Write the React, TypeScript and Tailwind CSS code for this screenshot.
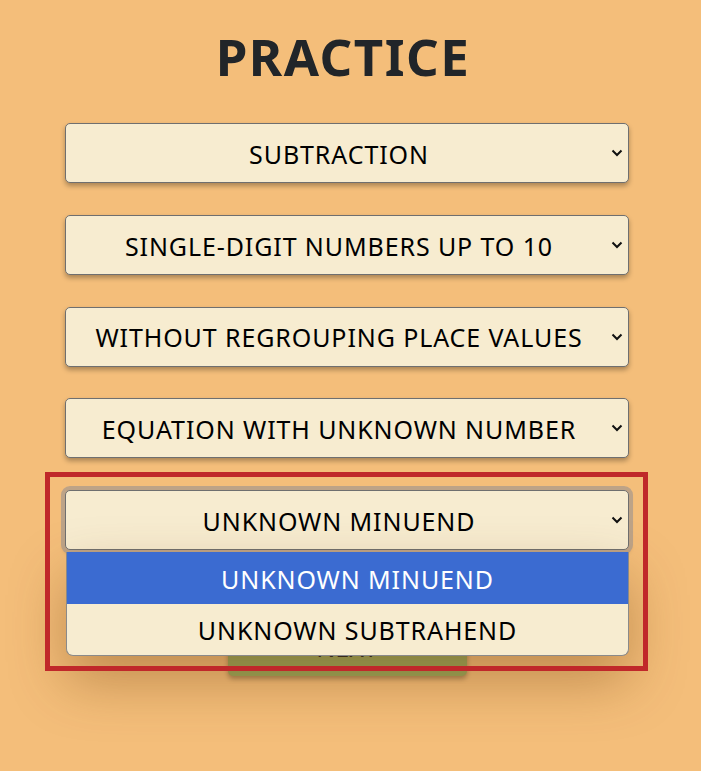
import React from "react";

function Chevron() {
  return (
    <svg width="12" height="8" viewBox="0 0 12 8" className="absolute right-[5px] top-1/2 -translate-y-1/2">
      <path d="M1.5 1.5 L6 6 L10.5 1.5" fill="none" stroke="#111" strokeWidth="2" />
    </svg>
  );
}

function FakeSelect({ label, focused }: { label: string; focused?: boolean }) {
  return (
    <div
      className={
        "relative h-[60px] w-full rounded-[5px] border border-[#6f6f6f] bg-[#f7ecd0] flex items-center justify-center pr-[16px] pt-[3px] text-[25px] text-black tracking-[0.9px] shadow-[0_3px_5px_rgba(0,0,0,0.3)] " +
        (focused ? "ring-[4px] ring-[#bda387]" : "")
      }
    >
      <span>{label}</span>
      <Chevron />
    </div>
  );
}

export default function App() {
  return (
    <div
      className="min-h-[771px] w-[701px] bg-[#f4be7a] relative overflow-hidden"
      style={{ fontFamily: '"Noto Sans", "Open Sans", sans-serif' }}
    >
      <div className="ml-[65px] w-[564px] flex flex-col items-center pt-[24px]">
        <h1 className="text-[51px] leading-[64px] font-bold text-[#212529] tracking-[1.5px] pr-[8px]">PRACTICE</h1>
        <div className="mt-[35px] w-full flex flex-col gap-[31.75px]">
          <FakeSelect label="SUBTRACTION" />
          <FakeSelect label="SINGLE-DIGIT NUMBERS UP TO 10" />
          <FakeSelect label="WITHOUT REGROUPING PLACE VALUES" />
          <FakeSelect label="EQUATION WITH UNKNOWN NUMBER" />
          <div className="relative">
            <FakeSelect label="UNKNOWN MINUEND" focused />
            <div className="absolute left-[1px] right-0 top-[62px] z-20 rounded-b-[7px] overflow-hidden border border-[#8a8a8a] border-t-0 bg-[#f7ecd0] shadow-[0_25px_55px_rgba(110,60,10,0.38)]">
              <div className="h-[52px] bg-[#3b6bd1] text-white text-[25px] flex items-center justify-center pl-[20px] pt-[3px] tracking-[0.9px]">UNKNOWN MINUEND</div>
              <div className="h-[51px] text-black text-[25px] flex items-center justify-center pl-[20px] pt-[3px] tracking-[0.9px]">UNKNOWN SUBTRAHEND</div>
            </div>
          </div>
        </div>
        <button className="mt-[76px] w-[239px] h-[50px] rounded-[5px] bg-[#9aa85c] text-[25px] leading-[30px] pb-[9px] text-[#222] shadow-[0_3px_5px_rgba(0,0,0,0.3)]">NEXT</button>
      </div>
      <div className="absolute left-[45px] top-[472px] w-[603px] h-[199px] border-[5px] border-[#c0282a] z-30 pointer-events-none" />
    </div>
  );
}
